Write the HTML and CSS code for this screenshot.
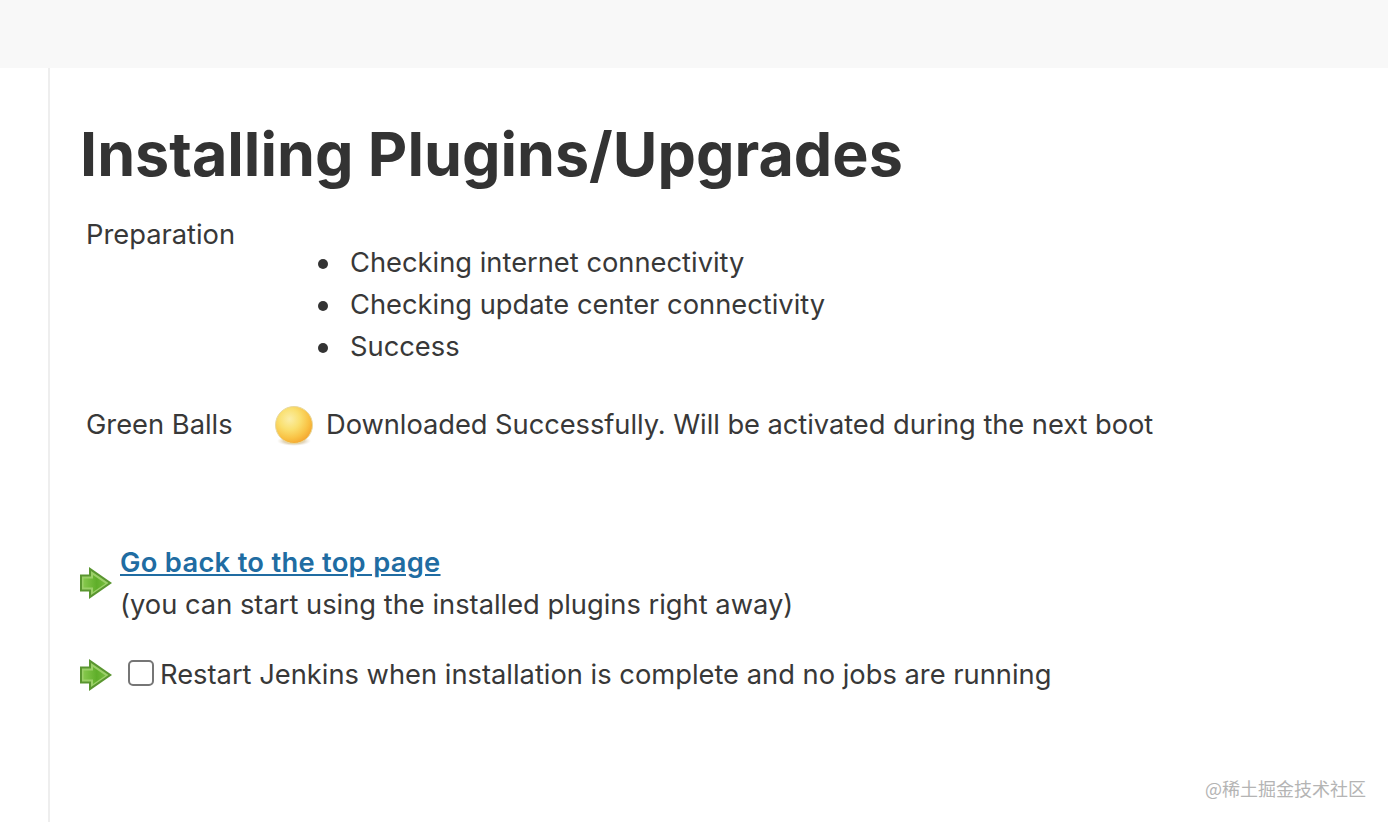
FILE: index.html
```html
<!DOCTYPE html>
<html lang="en">
<head>
    <meta charset="UTF-8">
    <title>Installing Plugins/Upgrades</title>
    <link rel="stylesheet" href="styles.css">
</head>
<body>
    <div class="top-bar"></div>
    <div class="page">
        <div class="side-panel"></div>
        <div class="main-panel">
            <h1>Installing Plugins/Upgrades</h1>

            <div class="job-row job-row-list">
                <div class="job-name">Preparation</div>
                <ul class="job-steps">
                    <li>Checking internet connectivity</li>
                    <li>Checking update center connectivity</li>
                    <li>Success</li>
                </ul>
            </div>

            <div class="job-row job-row-status">
                <div class="job-name">Green Balls</div>
                <div class="job-status">
                    <svg class="ball" width="42" height="42" viewBox="0 0 42 42">
                        <defs>
                            <radialGradient id="ballFill" cx="0.38" cy="0.34" r="0.7">
                                <stop offset="0" stop-color="#fbeea8"/>
                                <stop offset="0.4" stop-color="#fae070"/>
                                <stop offset="0.75" stop-color="#f9c244"/>
                                <stop offset="1" stop-color="#f4a52e"/>
                            </radialGradient>
                            <radialGradient id="ballShadow">
                                <stop offset="0.6" stop-color="#d9c8a8" stop-opacity="0.8"/>
                                <stop offset="1" stop-color="#e8e0d0" stop-opacity="0"/>
                            </radialGradient>
                        </defs>
                        <ellipse cx="21" cy="37" rx="17" ry="5" fill="url(#ballShadow)"/>
                        <circle cx="21" cy="21" r="18.500" fill="url(#ballFill)" stroke="#e8d9a0" stroke-width="1"/>
                    </svg>
                    <span class="status-text">Downloaded Successfully. Will be activated during the next boot</span>
                </div>
            </div>

            <div class="action action-back">
                <svg class="arrow" width="32" height="32" viewBox="0 0 32 32">
                    <defs>
                        <linearGradient id="arrowFill" x1="0" y1="0" x2="1" y2="0">
                            <stop offset="0" stop-color="#86c84c"/>
                            <stop offset="0.6" stop-color="#5fae2a"/>
                            <stop offset="1" stop-color="#74bb3c"/>
                        </linearGradient>
                    </defs>
                    <path d="M0 7.500H9V0L32 16L9 32V24.500H0Z" fill="#5a9630"/>
                    <path d="M2 9.500H11V4L28.500 16L11 28V22.500H2Z" fill="#9bd068"/>
                    <path d="M3.500 11.500H13V8L25.500 16.500L13 25V20.500H3.500Z" fill="url(#arrowFill)"/>
                </svg>
                <div>
                    <a href="#">Go back to the top page</a><br>
                    (you can start using the installed plugins right away)
                </div>
            </div>

            <div class="action action-restart">
                <svg class="arrow" width="32" height="32" viewBox="0 0 32 32">
                    <path d="M0 7.500H9V0L32 16L9 32V24.500H0Z" fill="#5a9630"/>
                    <path d="M2 9.500H11V4L28.500 16L11 28V22.500H2Z" fill="#9bd068"/>
                    <path d="M3.500 11.500H13V8L25.500 16.500L13 25V20.500H3.500Z" fill="url(#arrowFill)"/>
                </svg>
                <span class="checkbox"></span>
                <span>Restart Jenkins when installation is complete and no jobs are running</span>
            </div>
        </div>
    </div>
    <div class="watermark">@稀土掘金技术社区</div>
</body>
</html>
```

FILE: styles.css
```css
* {
    margin: 0;
    padding: 0;
    box-sizing: border-box;
}

html, body {
    height: 100%;
    overflow: hidden;
}

body {
    font-family: Inter, "Noto Sans", sans-serif;
    font-size: 27.3px;
    line-height: 42px;
    color: #383838;
    background: #fff;
    display: flex;
    flex-direction: column;
}

.top-bar {
    height: 68px;
    background: #f8f8f8;
}

.page {
    flex: 1;
    display: flex;
}

.side-panel {
    width: 50px;
    border-right: 2px solid #eee;
}

.main-panel {
    flex: 1;
    padding: 52px 30px 0;
}

h1 {
    font-size: 61px;
    font-weight: 700;
    line-height: 68px;
    margin-bottom: 26px;
    color: #333;
}

.job-row {
    display: flex;
    padding-left: 6px;
}

.job-name {
    width: 187px;
}

.job-steps {
    margin-top: 28px;
    padding-left: 77px;
    list-style: none;
}

.job-steps li {
    display: flex;
    align-items: center;
}

.job-steps li::before {
    content: "";
    width: 10px;
    height: 10px;
    margin: 2px 22px 0 -32px;
    border-radius: 50%;
    background: #333;
}

.job-row-status {
    margin-top: 36px;
}

.job-status {
    display: flex;
    align-items: center;
    gap: 11px;
}

.status-text {
    letter-spacing: -0.05px;
}

.ball {
    display: block;
}

.action {
    display: flex;
    align-items: center;
}

.action-back {
    margin-top: 96px;
    gap: 8px;
}

.action-back .arrow {
    margin-bottom: 2px;
}

.action-restart {
    margin-top: 28px;
}

.action a {
    color: #206ca2;
    font-weight: 600;
    letter-spacing: 0.3px;
}

.checkbox {
    width: 26px;
    height: 26px;
    margin: 0 6px 4px 16px;
    border: 2px solid #767676;
    border-radius: 5px;
    background: #fff;
}

.watermark {
    position: absolute;
    right: 22px;
    bottom: 22px;
    font-family: "Noto Sans CJK SC", sans-serif;
    font-size: 18px;
    line-height: 24px;
    color: #b4b4b4;
}
```
